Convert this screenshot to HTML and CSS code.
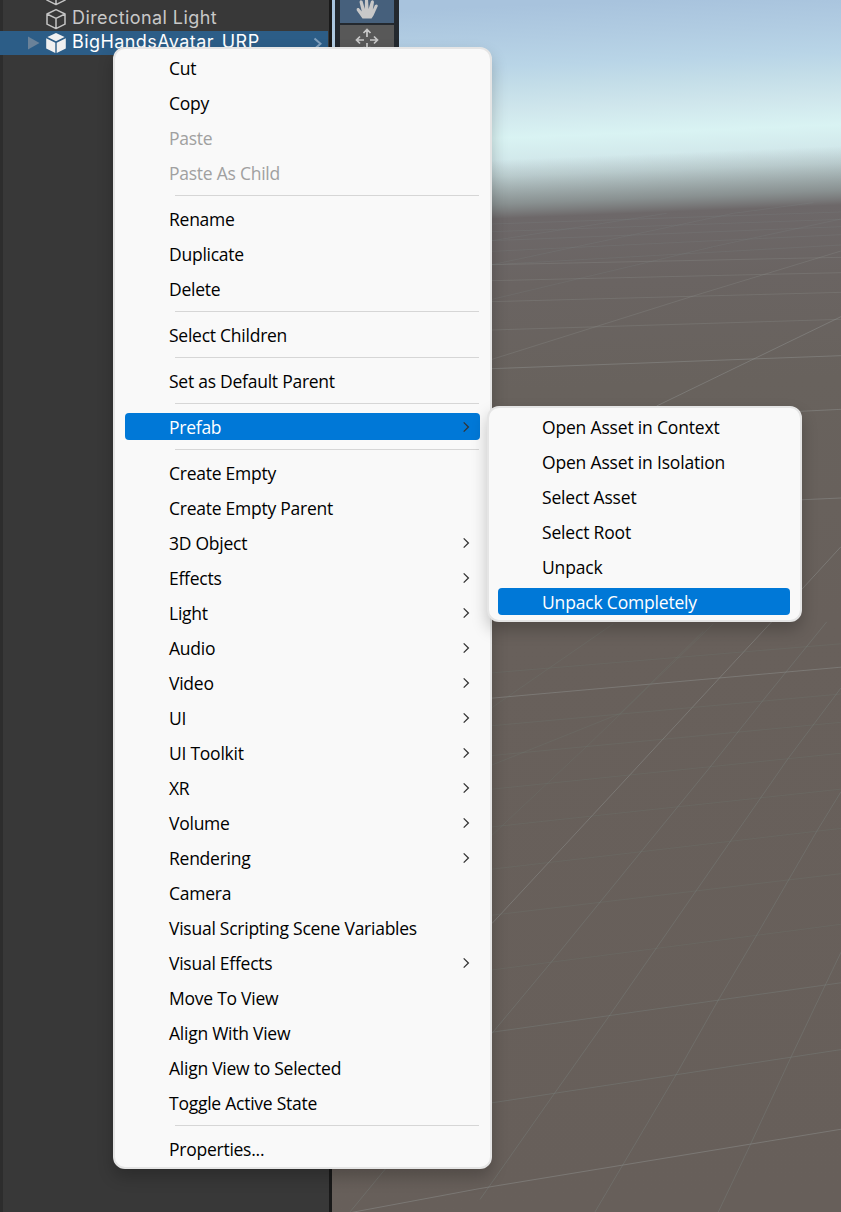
FILE: index.html
```html
<!DOCTYPE html>
<html lang="en">
<head>
<meta charset="utf-8">
<title>Hierarchy</title>
<link rel="stylesheet" href="styles.css">
</head>
<body>
<svg width="0" height="0" class="defs">
  <symbol id="cube" viewBox="0 0 22 22"><path d="M11 1.6 20 6v10.2L11 20.6 2 16.2V6zM2 6l9 4.4L20 6M11 10.4v10.2" fill="none" stroke="#c4c4c4" stroke-width="1.5" stroke-linejoin="round"/></symbol>
  <symbol id="chev" viewBox="0 0 8 12"><path d="M1.7 1.4 6.4 6 1.7 10.6" fill="none" stroke="currentColor" stroke-width="1.3"/></symbol>
</svg>
<div class="editor">
  <aside class="hierarchy">
    <div class="node"><svg class="cube"><use href="#cube"/></svg></div>
    <div class="node"><svg class="cube"><use href="#cube"/></svg><span>Directional Light</span></div>
    <div class="node node-selected">
      <svg class="fold" viewBox="0 0 12 14"><path d="M0 .5 11.5 7 0 13.5z" fill="#6a8299"/></svg>
      <svg class="cube" viewBox="0 0 22 22"><path d="M11 .9 19.6 5 11 9.300 2.400 5zM1.200 6.200 10.300 10.700V21L1.200 16.600zM20.800 6.200 11.700 10.700V21l9.100-4.400z" fill="#f0f0f0"/></svg>
      <span>BigHandsAvatar_URP</span>
      <svg class="open" viewBox="0 0 10 14"><path d="M1.500 1.500 7.500 6.800 1.500 12" fill="none" stroke="#7f9fbc" stroke-width="2"/></svg>
    </div>
  </aside>
  <main class="scene">
    <svg class="view" viewBox="332 0 509 1212" preserveAspectRatio="none">
      <defs>
        <linearGradient id="sky" gradientUnits="userSpaceOnUse" x1="650" y1="0" x2="658" y2="200">
          <stop offset="0" stop-color="#a8c3dd"/><stop offset=".16" stop-color="#b1cce2"/><stop offset=".3" stop-color="#b9d5e7"/>
          <stop offset=".4" stop-color="#c3dde8"/><stop offset=".52" stop-color="#cfe6ec"/><stop offset=".66" stop-color="#d9f3f3"/>
          <stop offset=".8" stop-color="#d0e6e9"/><stop offset="1" stop-color="#c2d4d5"/>
        </linearGradient>
        <linearGradient id="haze" gradientUnits="userSpaceOnUse" x1="0" y1="160" x2="0" y2="1212">
          <stop offset="0" stop-color="#7c8080" stop-opacity="0"/><stop offset=".016" stop-color="#7c8484" stop-opacity=".25"/>
          <stop offset=".042" stop-color="#7b8080" stop-opacity=".8"/><stop offset=".056" stop-color="#6d6869"/>
          <stop offset=".12" stop-color="#6a6462"/><stop offset=".22" stop-color="#68625d"/><stop offset=".45" stop-color="#68605b"/><stop offset="1" stop-color="#675f5a"/>
        </linearGradient>
      </defs>
      <rect x="332" width="509" height="300" fill="url(#sky)"/>
      <g transform="translate(492 0) skewY(-2.300)"><rect x="-160" y="160" width="520" height="1100" fill="url(#haze)"/></g>
      <g class="grid far" transform="translate(480 0) scale(.33333)">
        <path d="M36 672 1083 636M36 695 1083 658M36 722 1083 680M36 754 1083 704M36 794 1083 735M36 722 560 640M36 794 760 640 1000 608M36 898 700 740 1083 657"/>
      </g>
      <g class="grid mid" transform="translate(480 0) scale(.33333)">
        <path d="M36 842 1083 818M36 794 1083 772M36 905 1083 877M36 990 1083 958M36 1078 640 888 1083 753"/>
      </g>
      <g class="grid strong" transform="translate(480 0) scale(.33333)">
        <path d="M36 1106 1083 1067M530 1218 1083 950M960 1234 1083 1228M950 1500 1083 1494M960 1774 1083 1640"/>
      </g>
      <g class="grid strong" transform="translate(480 620) scale(.33333 .3775)">
        <path d="M36 207 1083 125M36 804 340 515 717 155 880 0M-444 1579 0 1506 1083 1349"/>
      </g>
      <g class="grid low" transform="translate(480 620) scale(.33333 .3775)">
        <path d="M36 140 1083 63M36 280 1083 196M36 359 1083 271M36 448 1083 353M36 548 1083 448M36 660 1083 552M36 782 1083 672M36 927 1083 806M36 232 400 10M36 384 420 248 670 30M36 570 320 335 600 96 700 10"/>
      </g>
      <g class="grid faint" transform="translate(480 620) scale(.33333 .3775)">
        <path d="M36 1092 1083 961M36 1279 1083 1138M36 1095 215 905 485 612 690 390 850 212 1040 5M0 1535 225 1252 390 1046 530 868 750 588 925 366 1083 180M345 1568 590 1202 718 1002 830 835 1010 560 1083 455M715 1568 812 1388 933 1158 1037 965 1083 880M-390 1568 -280 1450"/>
      </g>
    </svg>
    <div class="tools">
      <div class="tool tool-active">
        <svg width="24" height="24" viewBox="0 0 24 24"><path d="M7.500 18.500 1.800 10.500Q1 7.500 3.800 8L6.800 11.500 4.500 2Q5-1 7.500 1L9.800 9 10-1H13L13.600 9 16 1Q18.500-1 19 2L17.800 9.500 20 5Q22.800 3.500 22.800 6L18.500 15.500 16.500 18.500Z" fill="#c8c8c8"/></svg>
      </div>
      <div class="tool">
        <svg width="24" height="24" viewBox="0 0 24 24"><path d="M12 9V1.500M8.500 5 12 1.500 15.500 5M12 15v7.500M8.500 19l3.500 3.500 3.500-3.500M9 12H1.500M5 8.500 1.500 12 5 15.500M15 12h7.500M19 8.500l3.500 3.500-3.500 3.500" fill="none" stroke="#c8c8c8" stroke-width="1.700"/></svg>
      </div>
    </div>
  </main>
</div>

<nav class="menu menu-main">
  <div class="item">Cut</div>
  <div class="item">Copy</div>
  <div class="item off">Paste</div>
  <div class="item off">Paste As Child</div>
  <hr>
  <div class="item">Rename</div>
  <div class="item">Duplicate</div>
  <div class="item">Delete</div>
  <hr>
  <div class="item">Select Children</div>
  <hr>
  <div class="item">Set as Default Parent</div>
  <hr>
  <div class="item active">Prefab<svg class="chev"><use href="#chev"/></svg></div>
  <hr>
  <div class="item">Create Empty</div>
  <div class="item">Create Empty Parent</div>
  <div class="item">3D Object<svg class="chev"><use href="#chev"/></svg></div>
  <div class="item">Effects<svg class="chev"><use href="#chev"/></svg></div>
  <div class="item">Light<svg class="chev"><use href="#chev"/></svg></div>
  <div class="item">Audio<svg class="chev"><use href="#chev"/></svg></div>
  <div class="item">Video<svg class="chev"><use href="#chev"/></svg></div>
  <div class="item">UI<svg class="chev"><use href="#chev"/></svg></div>
  <div class="item">UI Toolkit<svg class="chev"><use href="#chev"/></svg></div>
  <div class="item">XR<svg class="chev"><use href="#chev"/></svg></div>
  <div class="item">Volume<svg class="chev"><use href="#chev"/></svg></div>
  <div class="item">Rendering<svg class="chev"><use href="#chev"/></svg></div>
  <div class="item">Camera</div>
  <div class="item">Visual Scripting Scene Variables</div>
  <div class="item">Visual Effects<svg class="chev"><use href="#chev"/></svg></div>
  <div class="item">Move To View</div>
  <div class="item">Align With View</div>
  <div class="item">Align View to Selected</div>
  <div class="item">Toggle Active State</div>
  <hr>
  <div class="item">Properties...</div>
</nav>

<nav class="menu menu-sub">
  <div class="item">Open Asset in Context</div>
  <div class="item">Open Asset in Isolation</div>
  <div class="item">Select Asset</div>
  <div class="item">Select Root</div>
  <div class="item">Unpack</div>
  <div class="item active">Unpack Completely</div>
</nav>
</body>
</html>
```
FILE: styles.css
```css
* { box-sizing: border-box; }
body { margin: 0; width: 841px; height: 1212px; overflow: hidden; position: relative; background: #383838; }
.defs { position: absolute; }
svg { display: block; flex: none; }

.editor { display: flex; height: 1212px; }
.hierarchy {
  width: 332px; overflow: hidden;
  border-right: 3px solid #191919;
  background: linear-gradient(to right, #2d2d2d 3px, #383838 3px);
  font: 18px/24px Inter, sans-serif; letter-spacing: .42px; color: #c8c8c8;
}
.node { display: flex; align-items: center; height: 24px; padding-left: 45px; }
.node:first-child { margin-top: -17px; }
.node .cube { width: 22px; height: 22px; margin-right: 5px; }
.node span { margin-bottom: 2px; }
.node-selected { background: #2c5d87; color: #fff; padding-left: 28px; margin-right: 1px; }
.fold { width: 12px; height: 14px; margin-right: 5px; }
.open { width: 10px; height: 14px; margin: 2px 5px 0 auto; }

.scene { position: relative; width: 509px; }
.view { width: 509px; height: 1212px; }
.grid path { fill: none; vector-effect: non-scaling-stroke; stroke-width: 1; }
.far path { stroke: rgba(135, 145, 145, .15); }
.faint path { stroke: rgba(130, 142, 138, .3); }
.mid path { stroke: rgba(145, 147, 145, .28); }
.strong path { stroke: rgba(145, 147, 145, .48); }
.low path { stroke: rgba(110, 125, 115, .25); }

.tools {
  position: absolute; left: 3px; top: 0; width: 64px; padding: 0 5px;
  display: flex; flex-direction: column; gap: 2px; background: #23282e;
}
.tool { height: 30px; display: flex; justify-content: center; padding-top: 3px; background: #585858; }
.tool-active { height: 23px; padding-top: 0; align-items: flex-start; background: #46607c; }

.menu {
  position: absolute; display: flex; flex-direction: column;
  padding: 1px 10px; background: #f9f9f9;
  border: 2px solid #e5e5e5; border-radius: 12px;
  box-shadow: 0 8px 16px rgba(0, 0, 0, .22);
  font: 17.500px/25px "Open Sans", "Noto Sans", sans-serif; font-weight: 380; font-stretch: 95%; letter-spacing: -.25px; color: #000;
}
.menu-main { left: 113px; top: 47px; width: 379px; height: 1122px; }
.menu-sub { left: 487px; top: 406px; width: 315px; height: 216px; padding-left: 9px; letter-spacing: -.18px; }
.item { display: flex; align-items: center; height: 27px; margin: 4px 0; padding: 2px 10px 0 44px; border-radius: 4px; white-space: nowrap; }
.menu hr { width: 304px; height: 1px; margin: 5px 0 5px 50px; border: 0; flex: none; background: #d6d6d6; }
.active { background: #0078d7; color: #fff; }
.off { color: #a0a0a0; }
.chev { width: 8px; height: 12px; margin: -2px 0 0 auto; color: #333; }
```
